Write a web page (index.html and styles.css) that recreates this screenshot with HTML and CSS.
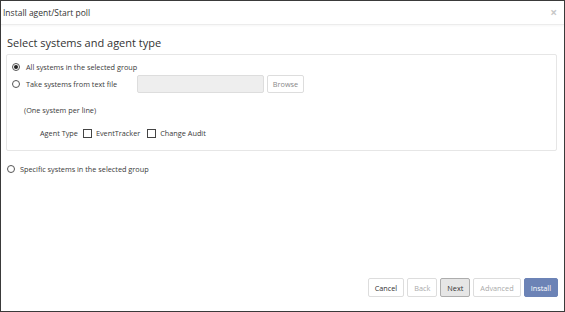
FILE: index.html
```html
<!DOCTYPE html>
<html lang="en">
<head>
  <meta charset="UTF-8">
  <title>Install agent/Start poll</title>
  <link rel="stylesheet" href="styles.css">
</head>
<body>
  <div class="dialog">
    <div class="header">
      <span class="title">Install agent/Start poll</span>
      <span class="close">&times;</span>
    </div>
    <div class="body">
      <h2>Select systems and agent type</h2>
      <div class="panel">
        <label class="row">
          <span class="radio checked"></span>All systems in the selected group
        </label>
        <div class="row file-row">
          <label class="file-label"><span class="radio"></span>Take systems from text file</label>
          <span class="file-input"></span>
          <span class="btn browse">Browse</span>
        </div>
        <div class="hint">(One system per line)</div>
        <div class="agent-type">
          <span class="agent-label">Agent Type</span>
          <label class="check"><span class="box"></span>EventTracker</label>
          <label class="check"><span class="box"></span>Change Audit</label>
        </div>
      </div>
      <label class="row specific">
        <span class="radio"></span>Specific systems in the selected group
      </label>
    </div>
    <div class="footer">
      <span class="btn">Cancel</span>
      <span class="btn disabled">Back</span>
      <span class="btn active">Next</span>
      <span class="btn disabled">Advanced</span>
      <span class="btn primary">Install</span>
    </div>
  </div>
</body>
</html>
```

FILE: styles.css
```css
html, body {
  margin: 0;
  height: 100%;
}
body {
  font-family: 'Open Sans', 'Noto Sans', sans-serif;
  color: #3a3a3a;
  background: #fff;
}
.dialog {
  box-sizing: border-box;
  height: 312px;
  border: 1px solid #3a3a3a;
  display: flex;
  flex-direction: column;
}
.header {
  display: flex;
  justify-content: space-between;
  align-items: center;
  height: 23px;
  padding: 0 7px 0 2px;
  border-bottom: 1px solid #ececec;
  box-shadow: 0 1px 2px rgba(0,0,0,0.04);
}
.title {
  font-size: 8.5px;
  color: #333;
}
.close {
  font-size: 12px;
  color: #c8c8c8;
  font-weight: bold;
}
.body {
  flex: 1;
  padding: 0 7px 0 5px;
}
h2 {
  font-size: 11px;
  line-height: 14px;
  font-weight: normal;
  margin: 11px 0 4px 1px;
  color: #333;
}
.panel {
  border: 1px solid #e6e6e6;
  border-radius: 2px;
  padding: 4px 0 11px 5px;
}
.row {
  display: flex;
  align-items: center;
  font-size: 7.3px;
  height: 15px;
}
.radio {
  box-sizing: border-box;
  width: 8px;
  height: 8px;
  border: 1px solid #555;
  border-radius: 50%;
  margin-right: 6px;
  position: relative;
}
.radio.checked::after {
  content: '';
  position: absolute;
  left: 1px;
  top: 1px;
  width: 4px;
  height: 4px;
  border-radius: 50%;
  background: #222;
}
.file-row {
  height: 19px;
}
.file-label {
  display: flex;
  align-items: center;
  width: 125px;
}
.file-input {
  box-sizing: border-box;
  width: 127px;
  height: 18px;
  background: #eee;
  border: 1px solid #ddd;
  border-radius: 2px;
  margin-right: 3px;
}
.btn {
  box-sizing: border-box;
  display: inline-flex;
  align-items: center;
  justify-content: center;
  height: 19px;
  padding: 0 6px;
  font-size: 7.3px;
  color: #333;
  background: #fff;
  border: 1px solid #ddd;
  border-radius: 2px;
}
.browse {
  color: #888;
  width: 37px;
  height: 18px;
}
.hint {
  font-size: 7.3px;
  line-height: 11px;
  margin: 12px 0 0 12px;
}
.agent-type {
  display: flex;
  align-items: center;
  font-size: 7.3px;
  line-height: 11px;
  margin: 12px 0 0 28px;
}
.agent-label {
  margin-right: 5px;
}
.check {
  display: flex;
  align-items: center;
  margin-right: 7px;
}
.box {
  box-sizing: border-box;
  width: 9px;
  height: 9px;
  border: 1px solid #444;
  margin-right: 4px;
}
.specific {
  margin: 10px 0 0 1px;
}
.specific .radio {
  margin-right: 5px;
}
.footer {
  display: flex;
  justify-content: flex-end;
  gap: 3px;
  padding: 0 6px 14px 0;
}
.btn.disabled {
  color: #aaa;
}
.btn.active {
  background: #e6e6e6;
  border-color: #adadad;
}
.btn.primary {
  background: #6c83b6;
  border-color: #6c83b6;
  color: #fff;
}
```
